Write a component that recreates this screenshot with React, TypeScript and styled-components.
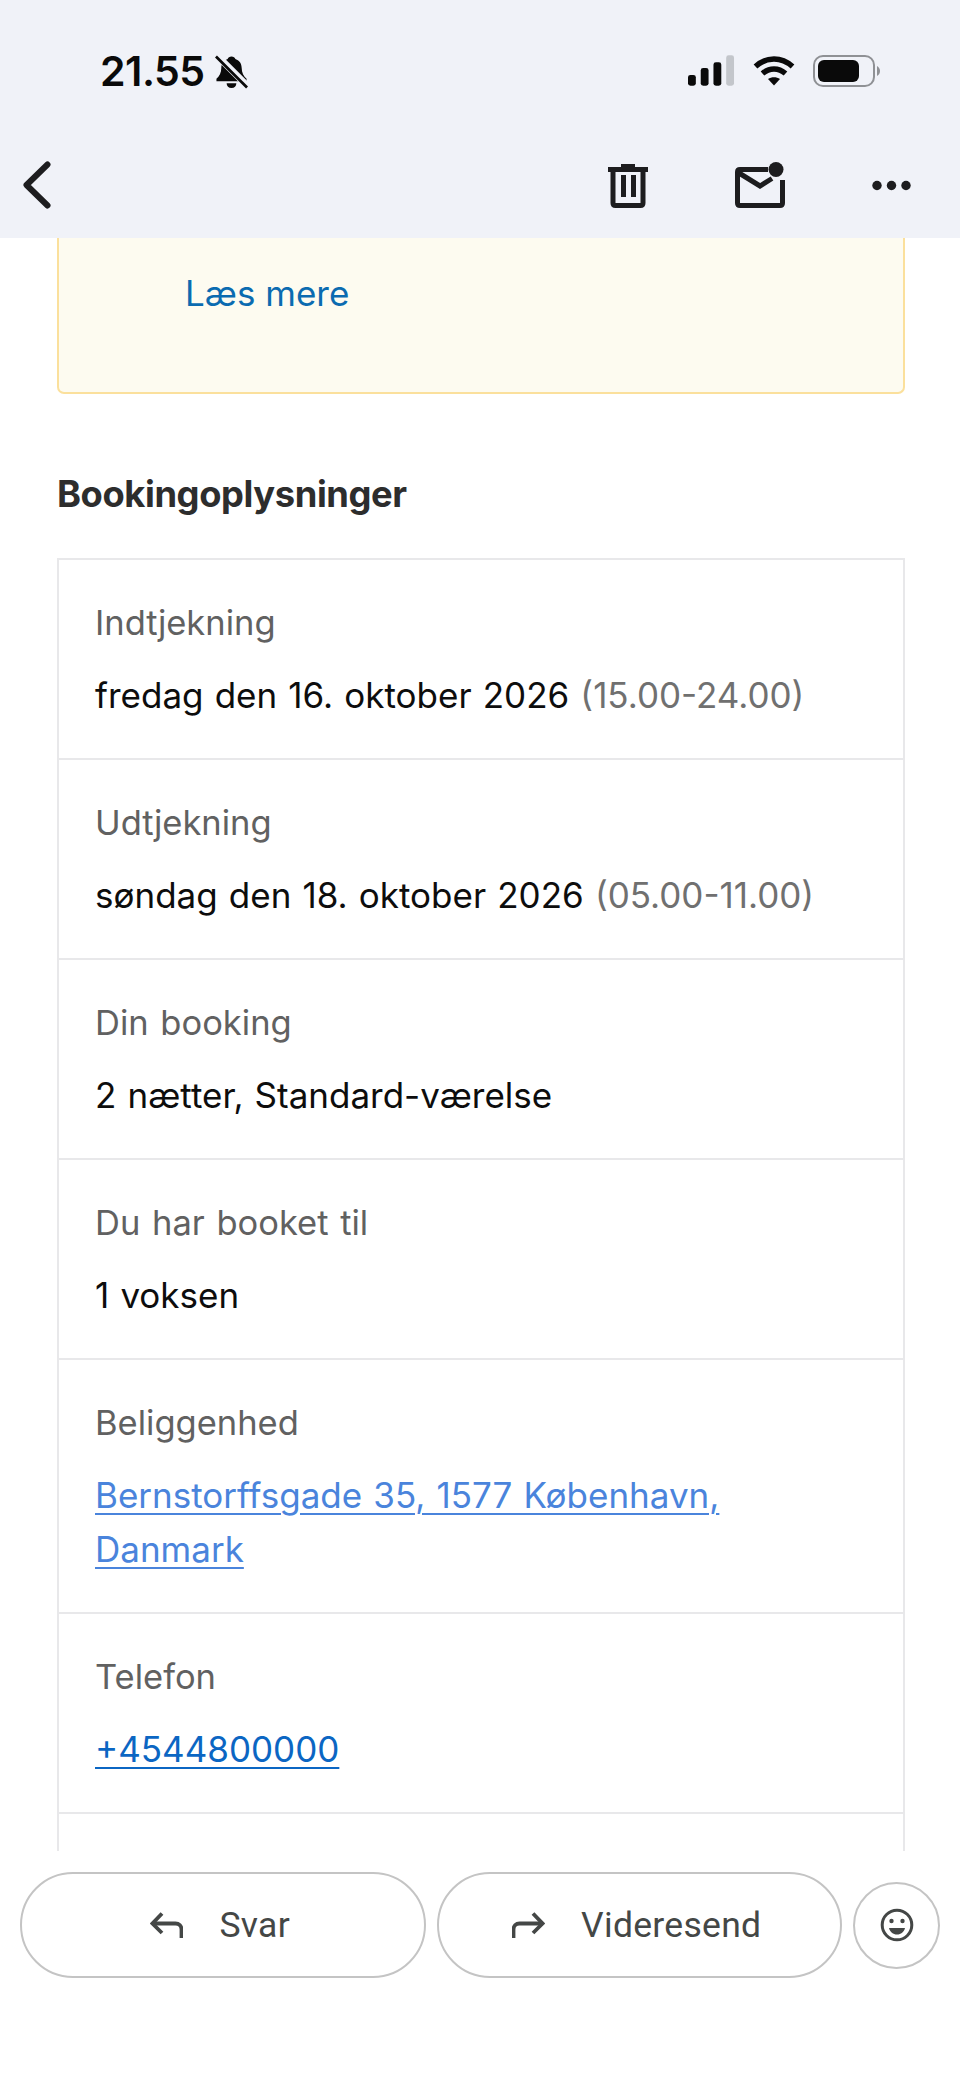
import { createGlobalStyle, styled } from 'styled-components'

const GlobalStyle = createGlobalStyle`
  html, body {
    margin: 0;
    padding: 0;
    background: #fff;
  }
  * {
    box-sizing: border-box;
  }
`

const Page = styled.div`
  width: 960px;
  height: 2081px;
  display: flex;
  flex-direction: column;
  overflow: hidden;
  background: #fff;
  font-family: Inter, 'Liberation Sans', sans-serif;
`

const Header = styled.header`
  flex: none;
  height: 238px;
  background: #f0f2f8;
`

const StatusBar = styled.div`
  height: 161px;
  padding: 55px 80px 0 100px;
  display: flex;
  align-items: flex-start;
`

const Time = styled.span`
  font-size: 41px;
  line-height: 33px;
  font-weight: 600;
  letter-spacing: -0.5px;
  color: #0a0a0a;
`

const StatusLeft = styled.div`
  display: flex;
  align-items: flex-start;
  gap: 10px;
`

const StatusRight = styled.div`
  margin-left: auto;
  display: flex;
  align-items: flex-start;
  gap: 18px;
`

const Toolbar = styled.div`
  display: flex;
  align-items: center;
  height: 48px;
  padding: 0 49px 0 23px;
`

const ToolbarActions = styled.div`
  margin-left: auto;
  display: flex;
  align-items: center;
  gap: 87px;
`

const Content = styled.main`
  flex: none;
  height: 1613px;
  overflow: hidden;
  padding: 0 55px 0 57px;
`

const Notice = styled.div`
  height: 156px;
  padding: 35px 0 0 126px;
  background: #fdfbf0;
  border: 2px solid #fbe09c;
  border-top: 0;
  border-radius: 0 0 7px 7px;
`

const NoticeLink = styled.a`
  font-size: 35px;
  line-height: 40px;
  color: #0b6bb0;
`

const Heading = styled.h2`
  margin: 76px 0 39.5px;
  font-size: 36.3px;
  line-height: 48px;
  font-weight: 700;
  letter-spacing: -0.4px;
  color: #2d2d2d;
`

const Table = styled.section`
  border: 2px solid #e8e8ea;
  border-bottom: 0;
  min-height: 1400px;
`

const Row = styled.div`
  padding: 36px 0 36px 36px;
  border-bottom: 2px solid #e8e8ea;
`

const Label = styled.div`
  font-size: 34.5px;
  line-height: 54px;
  word-spacing: 2px;
  color: #616161;
  margin-bottom: 18px;
`

const Value = styled.div`
  font-size: 35px;
  line-height: 54px;
  word-spacing: 1.3px;
  color: #0d0d0d;
`

const Hours = styled.span`
  color: #707070;
`

const ValueLink = styled.a<{ $tone: string }>`
  color: ${(p) => p.$tone};
  text-decoration: underline;
  text-underline-offset: 5px;
  text-decoration-thickness: 2px;
`

const BottomBar = styled.footer`
  flex: none;
  padding: 21px 20px 0;
  display: flex;
  align-items: center;
  gap: 11px;
`

const PillButton = styled.button`
  flex: 1;
  height: 106px;
  display: flex;
  align-items: center;
  justify-content: center;
  gap: 36px;
  background: #fff;
  border: 2px solid #c4c4c4;
  border-radius: 53px;
  padding: 0 5px 0 0;
  font-family: Roboto, 'Liberation Sans', sans-serif;
  font-size: 35.5px;
  letter-spacing: 0.3px;
  color: #444746;
`

const RoundButton = styled.button`
  flex: none;
  width: 87px;
  height: 87px;
  display: flex;
  align-items: center;
  justify-content: center;
  background: #fff;
  border: 2px solid #c4c4c4;
  border-radius: 50%;
  padding: 0;
`

const BellOff = () => (
  <svg width="33" height="34" viewBox="0 0 34 34">
    <path d="M17 1c2 0 3.500 1 4 2.500 4.500 1.500 6.500 5 6.500 9.500 0 5 2 8.500 5 11v2.500H1.500V24c3-2.500 5-6 5-11 0-4.500 2-8 6.500-9.500C13.500 2 15 1 17 1z" fill="#0a0a0a" />
    <path d="M12 28.500h10c0 3-2 5-5 5s-5-2-5-5z" fill="#0a0a0a" />
    <path d="M2 0l31 31" stroke="#f0f2f8" strokeWidth="7" />
    <path d="M1 1l32 32" stroke="#0a0a0a" strokeWidth="2.800" />
  </svg>
)

const Signal = () => (
  <svg width="47" height="32" viewBox="0 0 48 32" fill="#0a0a0a">
    <rect x="0" y="20" width="8" height="11" rx="2.500" />
    <rect x="13" y="13" width="8" height="18" rx="2.500" />
    <rect x="26" y="7" width="8" height="24" rx="2.500" />
    <rect x="39" y="0" width="8" height="31" rx="2.500" fill="#c3c6cb" />
  </svg>
)

const Wifi = () => (
  <svg width="42" height="31" viewBox="0 0 42 31" fill="none" stroke="#0a0a0a" strokeWidth="5.500">
    <path d="M2.500 11.500c11-10 26-10 37 0" />
    <path d="M9.500 18.500c7-6 16-6 23 0" />
    <path d="M21 30.500l-6-6.500c3.500-2.500 8.500-2.500 12 0z" fill="#0a0a0a" stroke="none" />
  </svg>
)

const Battery = () => (
  <svg width="67" height="32" viewBox="0 0 67 32">
    <rect x="1" y="1" width="60" height="30" rx="9" fill="none" stroke="#8f9195" strokeWidth="2" />
    <rect x="5" y="5" width="41" height="22" rx="6" fill="#0a0a0a" />
    <path d="M64 11c2 1 3 3 3 5s-1 4-3 5z" fill="#8f9195" />
  </svg>
)

const BackIcon = () => (
  <svg width="28" height="48" viewBox="0 0 28 48" fill="none">
    <path d="M24.500 3.500L3.500 24 24.500 44.500" stroke="#1d1d1f" strokeWidth="6" strokeLinecap="round" strokeLinejoin="round" />
  </svg>
)

const TrashIcon = () => (
  <svg width="40" height="46" viewBox="0 0 40 46" fill="none">
    <path d="M13 2h14v4H13z" fill="#1d1d1f" />
    <path d="M0 5h40v5H0z" fill="#1d1d1f" />
    <path d="M5 8v33c0 1.500 1 2.500 2.500 2.500h25c1.500 0 2.500-1 2.500-2.500V8" stroke="#1d1d1f" strokeWidth="5" />
    <path d="M13 13h5v22h-5zM23 13h5v22h-5z" fill="#1d1d1f" />
  </svg>
)

const MailIcon = () => (
  <svg width="50" height="46" viewBox="0 0 50 46" fill="none">
    <path d="M33 7.500H5C3.500 7.500 2.500 8.500 2.500 10v31c0 1.500 1 2.500 2.500 2.500h40c1.500 0 2.500-1 2.500-2.500V18" stroke="#1d1d1f" strokeWidth="5" />
    <path d="M4 11l21 13 12-7.500" stroke="#1d1d1f" strokeWidth="5" />
    <circle cx="41" cy="7.500" r="7.500" fill="#1d1d1f" />
  </svg>
)

const DotsIcon = () => (
  <svg width="39" height="11" viewBox="0 0 39 11" fill="#1d1d1f">
    <circle cx="5" cy="5.500" r="4.700" />
    <circle cx="19.500" cy="5.500" r="4.700" />
    <circle cx="34" cy="5.500" r="4.700" />
  </svg>
)

const ReplyIcon = () => (
  <svg width="33" height="26" viewBox="0 0 33 26" fill="none" stroke="#444746" strokeWidth="3.800">
    <path d="M12 1.500L2.500 11.500 12 21" />
    <path d="M2.500 11.500h23c3.500 0 6 2.500 6 6V26" />
  </svg>
)

const ForwardIcon = () => (
  <svg width="33" height="26" viewBox="0 0 33 26" fill="none" stroke="#444746" strokeWidth="3.800">
    <path d="M21 1.500l9.500 10L21 21" />
    <path d="M30.500 11.500h-23c-3.500 0-6 2.500-6 6V26" />
  </svg>
)

const SmileIcon = () => (
  <svg width="34" height="34" viewBox="0 0 34 34" fill="none">
    <circle cx="17" cy="17" r="14.800" stroke="#444746" strokeWidth="3" />
    <circle cx="11.500" cy="13" r="2.200" fill="#444746" />
    <circle cx="22.500" cy="13" r="2.200" fill="#444746" />
    <path d="M9 20h16c-1 4-4 6.500-8 6.500S10 24 9 20z" fill="#444746" />
  </svg>
)

export default function App() {
  return (
    <Page>
      <GlobalStyle />
      <Header>
        <StatusBar>
          <StatusLeft>
            <Time>21.55</Time>
            <BellOff />
          </StatusLeft>
          <StatusRight>
            <Signal />
            <Wifi />
            <Battery />
          </StatusRight>
        </StatusBar>
        <Toolbar>
          <BackIcon />
          <ToolbarActions>
            <TrashIcon />
            <MailIcon />
            <DotsIcon />
          </ToolbarActions>
        </Toolbar>
      </Header>
      <Content>
        <Notice>
          <NoticeLink>Læs mere</NoticeLink>
        </Notice>
        <Heading>Bookingoplysninger</Heading>
        <Table>
          <Row>
            <Label>Indtjekning</Label>
            <Value>
              fredag den 16. oktober 2026 <Hours>(15.00-24.00)</Hours>
            </Value>
          </Row>
          <Row>
            <Label>Udtjekning</Label>
            <Value>
              søndag den 18. oktober 2026 <Hours>(05.00-11.00)</Hours>
            </Value>
          </Row>
          <Row>
            <Label>Din booking</Label>
            <Value>2 nætter, Standard-værelse</Value>
          </Row>
          <Row>
            <Label>Du har booket til</Label>
            <Value>1 voksen</Value>
          </Row>
          <Row>
            <Label>Beliggenhed</Label>
            <Value>
              <ValueLink $tone="#4a84dc">
                Bernstorffsgade 35, 1577 København,
                <br />
                Danmark
              </ValueLink>
            </Value>
          </Row>
          <Row>
            <Label>Telefon</Label>
            <Value>
              <ValueLink $tone="#0b66c3">+4544800000</ValueLink>
            </Value>
          </Row>
        </Table>
      </Content>
      <BottomBar>
        <PillButton>
          <ReplyIcon />
          Svar
        </PillButton>
        <PillButton>
          <ForwardIcon />
          Videresend
        </PillButton>
        <RoundButton>
          <SmileIcon />
        </RoundButton>
      </BottomBar>
    </Page>
  )
}
